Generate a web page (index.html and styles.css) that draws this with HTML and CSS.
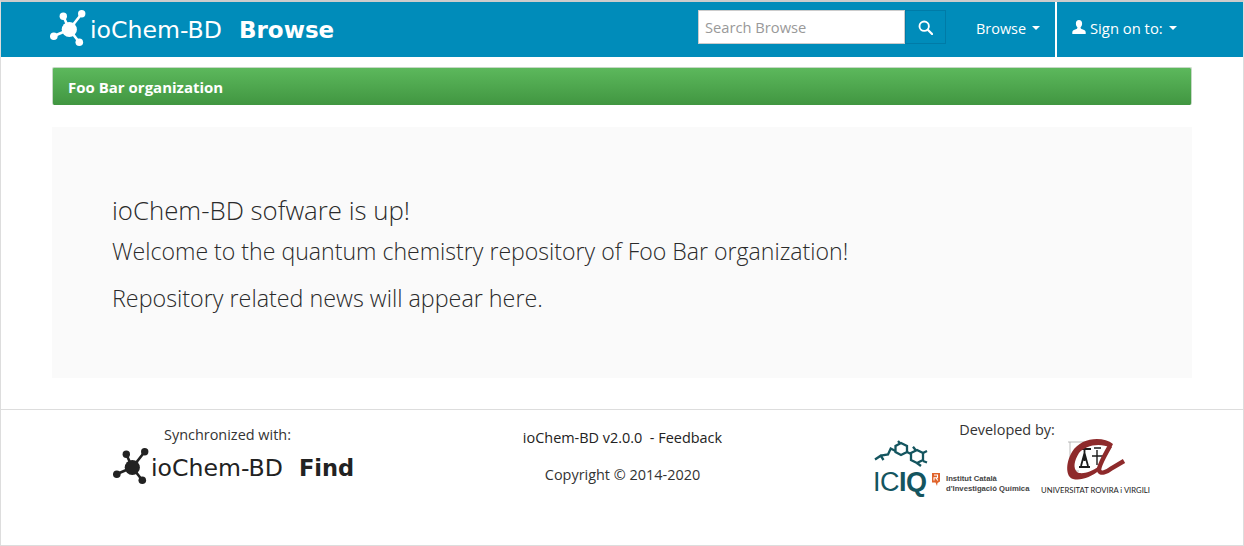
FILE: index.html
```html
<!DOCTYPE html>
<html lang="en">
<head>
<meta charset="utf-8">
<title>ioChem-BD Browse</title>
<link rel="stylesheet" href="styles.css">
</head>
<body>
<div class="page">
  <header class="navbar">
    <div class="brand">
      <svg class="mol" viewBox="0 -1 36 40" aria-hidden="true">
        <g fill="currentColor">
          <path d="M19.300 18.500 13.300 5.200M19.300 18.500 31.700 2.800M19.300 18.500 3.300 25.200M19.300 18.500 29.300 31.200" fill="none" stroke="currentColor" stroke-width="2.600"/>
          <circle cx="19.300" cy="18.500" r="7.600"/>
          <circle cx="13.300" cy="5.200" r="3.700"/>
          <circle cx="31.700" cy="2.800" r="3.700"/>
          <circle cx="3.800" cy="25.200" r="3.800"/>
          <circle cx="29.300" cy="31.200" r="3.800"/>
        </g>
      </svg>
      <span class="logo-text logo-nav">ioChem-BD<b>Browse</b></span>
    </div>
    <form class="search">
      <input class="search-input" type="text" placeholder="Search Browse">
      <button class="search-btn" type="button" aria-label="Search">
        <svg viewBox="0 0 16 16" width="15" height="15" aria-hidden="true"><circle cx="6.600" cy="6.600" r="5" fill="none" stroke="#fff" stroke-width="2"/><path d="M10.400 10.400 15 15" stroke="#fff" stroke-width="2.400" stroke-linecap="round"/></svg>
      </button>
    </form>
    <a class="nav-item nav-browse">Browse <i class="caret"></i></a>
    <a class="nav-item nav-sign">
      <svg class="user" viewBox="0 0 14 14" width="14" height="14" aria-hidden="true"><path d="M7 0C5 0 3.900 1.500 3.900 3.400 3.900 5 4.500 6.300 5.400 7.200 5.500 8.200 5 8.800 3.800 9.300 2 10 .4 10.500.3 12.200V14h13.400v-1.800C13.600 10.500 12 10 10.200 9.300 9 8.800 8.500 8.200 8.600 7.200 9.500 6.300 10.100 5 10.100 3.400 10.100 1.500 9 0 7 0Z" fill="#fff"/></svg>
      Sign on to: <i class="caret"></i>
    </a>
  </header>

  <main class="container">
    <div class="org-panel">Foo Bar organization</div>
    <section class="jumbo">
      <p class="hello">ioChem-BD sofware is up!</p>
      <p class="welcome">Welcome to the quantum chemistry repository of Foo Bar organization!</p>
      <p class="news">Repository related news will appear here.</p>
    </section>
  </main>

  <footer class="footer">
    <div class="col-sync">
      <div class="sync-label">Synchronized with:</div>
      <div class="find-logo">
        <svg class="mol mol-find" viewBox="0 -1 36 40" aria-hidden="true">
          <g fill="currentColor">
            <path d="M19.300 18.500 13.300 5.200M19.300 18.500 31.700 2.800M19.300 18.500 3.300 25.200M19.300 18.500 29.300 31.200" fill="none" stroke="currentColor" stroke-width="2.600"/>
            <circle cx="19.300" cy="18.500" r="7.600"/>
            <circle cx="13.300" cy="5.200" r="3.700"/>
            <circle cx="31.700" cy="2.800" r="3.700"/>
            <circle cx="3.800" cy="25.200" r="3.800"/>
            <circle cx="29.300" cy="31.200" r="3.800"/>
          </g>
        </svg>
        <span class="logo-text logo-find">ioChem-BD<b>Find</b></span>
      </div>
    </div>
    <div class="col-mid">
      <div class="version">ioChem-BD v2.0.0 &nbsp;- Feedback</div>
      <div class="copy">Copyright © 2014-2020</div>
    </div>
    <div class="col-dev">
      <div class="dev-label">Developed by:</div>
      <div class="dev-logos">
        <div class="iciq">
          <div class="iciq-main">
            <svg class="iciq-mol" viewBox="0 0 52 25" aria-hidden="true">
              <g fill="none" stroke="#14555f" stroke-width="2.300">
                <path d="M0 18.500 5.700 14.700 8.500 19M5.700 14.700 13 13.500 15.700 7.500 20.500 10M23 0 25 2.200M32 11 36 13M38 5.700 41 9.500M48 12 52 10M48 20 52 21.500M42 22 46 25"/>
                <polygon points="26,2 32,5 32,11 26,14 20.500,11 20.500,5"/>
                <polygon points="42,9 48,12 48,19 42,22 36,19 36,12"/>
              </g>
            </svg>
            <div class="iciq-word"><span class="ic">IC</span><span class="iq">IQ</span></div>
          </div>
          <svg class="iciq-tag" viewBox="0 0 8 13" aria-hidden="true">
            <path d="M0 0H8V8.500L5.500 10 5 13 3.500 9.500H0Z" fill="#e0632a"/>
            <path d="M2 2H5.500V4.800H2V7.500M4 5 5.800 7.500" fill="none" stroke="#fff" stroke-width="1.100"/>
          </svg>
          <div class="iciq-name">Institut Català<br>d'Investigació Química</div>
        </div>
        <div class="urv">
          <svg class="urv-mark" viewBox="0 0 58 41" aria-hidden="true">
            <path d="M1 3H36M3 3V30M5 32H12" fill="none" stroke="#aaa" stroke-width=".8"/>
            <g stroke="#1c1c1c" fill="none">
              <path d="M12 10H24M17.500 10V22M17.500 14 14 27M17.500 14 21 27M12 28H23" stroke-width="1.800"/>
              <path d="M30 11V26M25 17H37M27 9H34" stroke-width="1.400"/>
            </g>
            <path d="M46 5C36-3 14-2 5 13-2 25-1 38 6 40 14 42 24 38 33 31L31 28C24 33 14 36 10 33 6 29 7 22 12 14 18 7 32 3 44 9Z" fill="#8e2a2b"/>
            <path d="M43 7C39 14 32 26 32 31 33 36 40 33 45 29L57 22" fill="none" stroke="#8e2a2b" stroke-width="4.500"/>
          </svg>
          <div class="urv-name">UNIVERSITAT ROVIRA i VIRGILI</div>
        </div>
      </div>
    </div>
  </footer>
</div>
</body>
</html>
```
FILE: styles.css
```css
* { box-sizing: border-box; }
html, body { margin: 0; padding: 0; background: #fff; }
body { font-family: "Open Sans", sans-serif; font-size: 14.45px; color: #333; }
.page {
  height: 546px; border: 1px solid #ddd; border-top: 2px solid #ccc;
  display: flex; flex-direction: column;
}
.navbar {
  height: 55px; background: #008cba; display: flex; align-items: stretch;
  padding-left: 49px; color: #fff; flex: none;
}
.brand { display: flex; align-items: center; width: 648px; }
.mol { color: #fff; display: block; flex: none; width: 36px; height: 40px; }
.logo-text { font-family: "DejaVu Sans", sans-serif; white-space: nowrap; }
.logo-text b { font-weight: 700; margin-left: 17px; font-size: 23px; }
.logo-nav { font-size: 23.6px; margin-left: 4px; }
.search { display: flex; margin: 8px 0 0; height: 34px; width: 248px; }
.search-input {
  width: 207px; height: 34px; border: 1px solid #ccc; background: #fff; padding: 0 6px;
  font: 14.7px "Open Sans", sans-serif; color: #333; outline: 0; border-radius: 0;
}
.search-input::placeholder { color: #999; opacity: 1; }
.search-btn {
  width: 41px; height: 34px; padding: 0; border: 1px solid #007ba7; background: #008cba;
  display: flex; align-items: center; justify-content: center;
}
.nav-item { display: flex; align-items: center; color: #fff; white-space: nowrap; padding-bottom: 3px; }
.nav-browse { width: 111px; padding-left: 30px; border-right: 2px solid #fff; gap: 4px; }
.nav-sign { padding-left: 15px; gap: 4px; font-size: 14.8px; }
.caret { width: 0; height: 0; border: 4px solid transparent; border-top-color: #fff; border-bottom: 0; margin-left: 2px; display: inline-block; }
.user { margin-bottom: 3px; }
.container { width: 1140px; margin: 10px 0 0 51px; flex: none; }
.org-panel {
  height: 38px; border: 1px solid #c6d8c6; border-bottom: 0; border-radius: 2px;
  background: linear-gradient(#5cb85c, #419641); color: #fff;
  font-weight: 700; font-size: 15px; line-height: 38px; padding-left: 15px;
}
.jumbo { margin-top: 22px; height: 251px; background: #fafafa; padding: 66px 60px 0; font-weight: 300; color: #2a2a2a; }
.jumbo p { margin: 0; line-height: 34px; }
.hello { font-size: 25.8px; }
.welcome { font-size: 23.1px; margin-top: 7px !important; }
.news { font-size: 23.3px; margin-top: 13px !important; }
.footer {
  margin-top: 31px; border-top: 1px solid #ddd; flex: 1;
  display: grid; grid-template-columns: 453px 337px 1fr;
}
.col-sync { padding: 14px 0 0 110px; text-align: center; }
.sync-label { padding-right: 110px; line-height: 19px; margin-top: 1px; }
.find-logo { display: flex; align-items: center; margin-top: 4px; color: #222; padding-left: 2px; }
.mol-find { color: #222; }
.logo-find { font-size: 23.6px; margin-left: 2px; color: #222; }
.logo-find b { font-size: 22.5px; margin-left: 16px; }
.col-mid { padding-top: 18px; text-align: center; }
.version { color: #222; line-height: 20px; }
.copy { margin-top: 17px; line-height: 20px; }
.col-dev { padding-top: 10px; margin-left: 47px; text-align: center; }
.dev-label { line-height: 19px; padding-right: 67px; }
.dev-logos { display: flex; align-items: flex-end; margin-left: 37px; }
.iciq { display: flex; align-items: flex-end; width: 165px; padding-bottom: 1px; }
.iciq-main { width: 52px; flex: none; }
.iciq-mol { width: 52px; height: 25px; display: block; overflow: visible; }
.iciq-word { font-family: "Liberation Sans", sans-serif; font-size: 27px; letter-spacing: -.5px; line-height: 22px; margin: 5px 0 1px -2px; color: #14555f; white-space: nowrap; text-align: left; }
.iq { font-weight: 700; }
.iciq-tag { width: 8px; height: 13px; margin: 0 0 8px 5px; flex: none; }
.iciq-name { font-family: "Liberation Sans", sans-serif; font-weight: 700; font-size: 7.7px; line-height: 10px; color: #444; text-align: left; white-space: nowrap; margin-left: 6px; }
.urv { width: 111px; display: flex; flex-direction: column; align-items: center; }
.urv-mark { width: 58px; height: 41px; display: block; overflow: visible; margin-right: -1px; }
.urv-name { font-family: Lato, sans-serif; font-size: 7.7px; line-height: 10px; color: #222; white-space: nowrap; margin-top: 5px; }
```
